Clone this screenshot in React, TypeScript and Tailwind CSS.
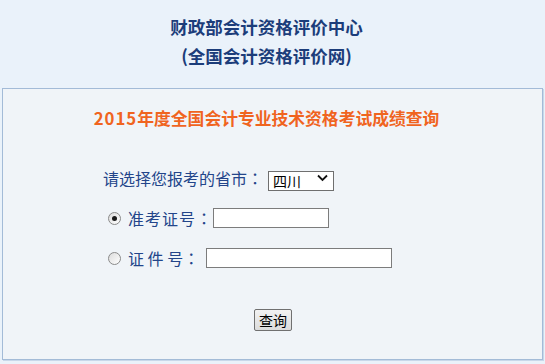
import React from "react";

const cjk = { fontFamily: '"Noto Sans CJK SC", "Microsoft YaHei", sans-serif' };
const colon = { fontFamily: '"Noto Sans CJK TC", sans-serif' };

function Radio({ checked }: { checked?: boolean }) {
  return (
    <span className="flex h-[13px] w-[13px] items-center justify-center rounded-full border border-[#8a8a8a] bg-gradient-to-br from-[#dcdcdc] to-[#ffffff]">
      {checked && <span className="block h-[5px] w-[5px] rounded-full bg-[#1a1a1a]" />}
    </span>
  );
}

export default function App() {
  return (
    <div className="h-[364px] w-[545px] overflow-hidden bg-[#eaf2fa] pt-[12px]" style={cjk}>
      <div className="pr-[12px] text-center text-[17.5px] font-bold leading-[29px] text-[#1c3d7a]">
        <div>财政部会计资格评价中心</div>
        <div>(全国会计资格评价网)</div>
      </div>
      <div className="mx-[2px] mt-[18px] h-[272px] border border-[#a3bbd7] bg-[#f0f4f8] pt-[17px] shadow-[1px_1px_0_#c8d8ea]">
        <div className="pr-[12px] text-center text-[16.8px] font-bold leading-[24px] text-[#f0641f]">
          <span className="tracking-[1px]">2015</span>年度全国会计专业技术资格考试成绩查询
        </div>
        <div className="mt-[38px] flex h-[20px] items-center pl-[100px]">
          <span className="text-[16px] leading-[20px] text-[#23458a]">
            请选择您报考的省市<span style={colon}>：</span>
          </span>
          <div className="relative ml-[5px] h-[20px] w-[66px]">
            <select
              className="h-[20px] w-[66px] appearance-none border border-[#6f6f6f] bg-white pl-[4px] text-[14px] leading-[18px] text-black outline-none"
              style={cjk}
              defaultValue="四川"
            >
              <option>四川</option>
            </select>
            <svg className="pointer-events-none absolute right-[6px] top-[6px]" width="11" height="8" viewBox="0 0 11 8">
              <path d="M1 1.5 L5.5 6 L10 1.5" fill="none" stroke="#111" strokeWidth="1.8" />
            </svg>
          </div>
        </div>
        <div className="mt-[20px] flex h-[20px] items-center pl-[105px]">
          <Radio checked />
          <span className="ml-[7px] text-[16px] leading-[20px] tracking-[1px] text-[#23458a]">
            准考证号<span style={colon}>：</span>
          </span>
          <input className="h-[20px] w-[116px] border border-[#7c7c7c] bg-white outline-none" />
        </div>
        <div className="mt-[20px] flex h-[20px] items-center pl-[105px]">
          <Radio />
          <span className="ml-[7px] text-[16px] leading-[20px] text-[#23458a]">
            证 件 号<span style={colon}>：</span>
          </span>
          <input className="ml-[7px] h-[20px] w-[186px] border border-[#7c7c7c] bg-white outline-none" />
        </div>
        <div className="mt-[39px] pl-[251px]">
          <button
            className="h-[22px] w-[38px] rounded-[2px] border border-[#707070] bg-gradient-to-b from-[#f2f2f2] to-[#dcdcdc] text-[14px] leading-[20px] text-black"
            style={{ fontFamily: '"Noto Sans CJK SC", sans-serif' }}
          >
            查询
          </button>
        </div>
      </div>
    </div>
  );
}
